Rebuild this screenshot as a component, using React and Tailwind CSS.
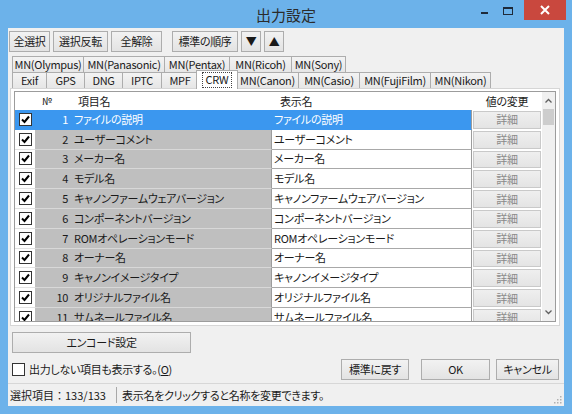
import React from "react";

const rows = [
  "ファイルの説明",
  "ユーザーコメント",
  "メーカー名",
  "モデル名",
  "キャノンファームウェアバージョン",
  "コンポーネントバージョン",
  "ROMオペレーションモード",
  "オーナー名",
  "キャノンイメージタイプ",
  "オリジナルファイル名",
  "サムネールファイル名",
];

const tabs1 = [
  ["MN(Olympus)", "w-[72px]"],
  ["MN(Panasonic)", "w-[82px]"],
  ["MN(Pentax)", "w-[66px]"],
  ["MN(Ricoh)", "w-[63px]"],
  ["MN(Sony)", "w-[55px]"],
];

const tabs2 = [
  ["Exif", "w-[35px]"],
  ["GPS", "w-[39px]"],
  ["DNG", "w-[39px]"],
  ["IPTC", "w-[40px]"],
  ["MPF", "w-[38px]"],
  ["CRW", "w-[42px]"],
  ["MN(Canon)", "w-[63px]"],
  ["MN(Casio)", "w-[62px]"],
  ["MN(FujiFilm)", "w-[72px]"],
  ["MN(Nikon)", "w-[61px]"],
];

function Btn({ children, className = "" }) {
  return (
    <div
      className={
        "flex items-center justify-center h-[21px] border border-[#adadad] bg-gradient-to-b from-[#f2f2f2] to-[#e3e3e3] text-[11px] text-[#1a1a1a] leading-none " +
        className
      }
    >
      {children}
    </div>
  );
}

function Check({ checked = true }) {
  return (
    <div className="w-[13px] h-[13px] border border-[#333] bg-white flex items-center justify-center">
      {checked && (
        <svg width="11" height="11" viewBox="0 0 11 11">
          <path d="M2 5.5 L4.5 8 L9 2.5" stroke="#000" strokeWidth="2" fill="none" />
        </svg>
      )}
    </div>
  );
}

function Tab({ label, w, selected }) {
  if (selected) {
    return (
      <div
        className={
          "relative z-10 -mx-[2px] -mt-[2px] h-[19px] border border-b-0 border-[#adadad] bg-white flex items-start justify-center pt-[1px] text-[11px] text-[#1a1a1a] leading-none " +
          w
        }
      >
        <span className="border border-dotted border-[#444] px-[3px] pt-[1px] pb-[2px]">{label}</span>
      </div>
    );
  }
  return (
    <div
      className={
        "h-[17px] -mr-[1px] border border-[#adadad] bg-gradient-to-b from-[#f3f3f3] to-[#e6e6e6] flex items-center justify-center text-[11px] text-[#1a1a1a] leading-none whitespace-nowrap " +
        w
      }
    >
      {label}
    </div>
  );
}

export default function App() {
  return (
    <div className="w-[572px] h-[414px] bg-[#6cb2ea] flex flex-col font-['Noto_Sans_CJK_JP',sans-serif] [font-feature-settings:'palt'] tracking-[-0.3px] overflow-hidden">
      {/* Title bar */}
      <div className="relative h-[28px] flex items-center justify-center">
        <span className="text-[15px] text-[#2b2b2b] pt-[2px] tracking-normal">出力設定</span>
        <div className="absolute top-0 right-[6px] flex items-start">
          <div className="w-[20px] h-[20px] flex items-center justify-center mr-[4px]">
            <div className="w-[7px] h-[2px] bg-[#1e2a3a] mt-[6px]" />
          </div>
          <div className="w-[20px] h-[20px] flex items-start justify-center pt-[7px] mr-[6px]">
            <div className="w-[10px] h-[8px] border border-[#1e2a3a] border-t-2" />
          </div>
          <div className="w-[42px] h-[20px] bg-[#c9483e] flex items-center justify-center">
            <svg width="10" height="10" viewBox="0 0 10 10">
              <path d="M1 1 L9 9 M9 1 L1 9" stroke="#fff" strokeWidth="2" />
            </svg>
          </div>
        </div>
      </div>

      {/* Client */}
      <div className="mx-[8px] mb-[8px] flex-1 bg-[#f0f0f0] flex flex-col">
        {/* toolbar */}
        <div className="mt-[3px] ml-[1px] flex items-center">
          <Btn className="w-[41px]">全選択</Btn>
          <Btn className="w-[55px] ml-[3px]">選択反転</Btn>
          <Btn className="w-[51px] ml-[3px]">全解除</Btn>
          <Btn className="w-[66px] ml-[10px]">標準の順序</Btn>
          <Btn className="w-[20px] ml-[3px] text-[10px]">▼</Btn>
          <Btn className="w-[20px] ml-[3px] text-[10px]">▲</Btn>
        </div>

        {/* tabs */}
        <div className="mt-[4px] ml-[4px] flex">
          {tabs1.map(([l, w]) => (
            <Tab key={l} label={l} w={w} />
          ))}
        </div>
        <div className="ml-[4px] -mt-[1px] flex items-start h-[17px]">
          {tabs2.map(([l, w]) => (
            <Tab key={l} label={l} w={w} selected={l === "CRW"} />
          ))}
        </div>

        {/* tab panel */}
        <div className="ml-[2px] mr-[4px] -mt-[1px] border border-[#d6d6d6] bg-white pt-[2px] pb-[3px] px-[3px]">
          <div className="h-[231px] border border-[#9c9c9c] bg-white flex">
            <div className="w-[527px] flex flex-col">
              {/* header */}
              <div className="h-[18px] flex items-center text-[11px] text-[#1a1a1a] leading-none">
                <div className="w-[20px]" />
                <div className="w-[37px] pl-[7px] text-[10px]">№</div>
                <div className="w-[200px] pl-[6px]">項目名</div>
                <div className="w-[200px] pl-[8px]">表示名</div>
                <div className="w-[70px] text-center">値の変更</div>
              </div>
              {/* body */}
              <div className="flex-1 overflow-hidden">
                {rows.map((name, i) => {
                  const sel = i === 0;
                  return (
                    <div key={i} className="h-[19.8px] flex text-[11px] leading-none">
                      <div
                        className={
                          "w-[20px] flex items-center justify-center border-b " +
                          (sel ? "bg-[#3b97ef] border-[#3b97ef]" : "bg-white border-[#e2e2e2]")
                        }
                      >
                        <Check />
                      </div>
                      <div
                        className={
                          "w-[37px] flex items-center justify-end pr-[4px] border-b " +
                          (sel ? "bg-[#3b97ef] text-white border-[#3b97ef]" : "bg-[#bfbfbf] text-[#1a1a1a] border-[#d8d8d8]")
                        }
                      >
                        {i + 1}
                      </div>
                      <div
                        className={
                          "w-[200px] flex items-center pl-[2px] border-b border-r whitespace-nowrap " +
                          (sel ? "bg-[#3b97ef] text-white border-[#3b97ef]" : "bg-[#bfbfbf] text-[#1a1a1a] border-[#d8d8d8] border-r-[#9c9c9c]")
                        }
                      >
                        {name}
                      </div>
                      <div
                        className={
                          "w-[200px] flex items-center pl-[2px] border-b border-r whitespace-nowrap " +
                          (sel ? "bg-[#3b97ef] text-white border-[#3b97ef] border-r-[#9c9c9c]" : "bg-white text-[#1a1a1a] border-[#a8a8a8] border-r-[#9c9c9c]")
                        }
                      >
                        {name}
                      </div>
                      <div className="w-[70px] bg-white py-[1px] px-[1px]">
                        <div className="h-full border border-[#c9c9c9] bg-gradient-to-b from-[#efefef] to-[#e4e4e4] flex items-center justify-center text-[#8a8a8a]">
                          詳細
                        </div>
                      </div>
                    </div>
                  );
                })}
              </div>
            </div>
            {/* scrollbar */}
            <div className="w-[13px] bg-[#f0f0f0] flex flex-col items-center">
              <div className="h-[17px] flex items-center justify-center">
                <svg width="7" height="5" viewBox="0 0 7 5">
                  <path d="M0.5 4.5 L3.5 1.5 L6.5 4.5" stroke="#606060" strokeWidth="1.3" fill="none" />
                </svg>
              </div>
              <div className="w-[11px] h-[16px] bg-[#cdcdcd]" />
              <div className="flex-1" />
              <div className="h-[17px] flex items-center justify-center">
                <svg width="7" height="5" viewBox="0 0 7 5">
                  <path d="M0.5 0.5 L3.5 3.5 L6.5 0.5" stroke="#606060" strokeWidth="1.3" fill="none" />
                </svg>
              </div>
            </div>
          </div>
        </div>

        {/* encode button */}
        <div className="mt-[6px] ml-[4px]">
          <Btn className="w-[179px]">エンコード設定</Btn>
        </div>

        {/* bottom row */}
        <div className="mt-[6px] h-[21px] flex items-center">
          <div className="ml-[4px] w-[13px] h-[13px] border border-[#333] bg-white" />
          <span className="ml-[4px] text-[11px] text-[#1a1a1a] leading-none">
            出力しない項目も表示する。(<span className="underline">O</span>)
          </span>
          <div className="flex-1" />
          <Btn className="w-[68px]">標準に戻す</Btn>
          <Btn className="w-[69px] ml-[12px]">OK</Btn>
          <Btn className="w-[63px] ml-[6px] mr-[5px]">キャンセル</Btn>
        </div>

        {/* status bar */}
        <div className="mt-auto h-[23px] border-t border-[#d7d7d7] flex items-center text-[11px] text-[#1a1a1a] leading-none relative">
          <span className="ml-[2px] w-[106px] [font-feature-settings:normal] tracking-normal">選択項目：133/133</span>
          <div className="w-[1px] h-[16px] bg-[#a8a8a8]" />
          <span className="ml-[5px]">表示名をクリックすると名称を変更できます。</span>
          <svg className="absolute right-[2px] bottom-[2px]" width="10" height="10" viewBox="0 0 10 10">
            <rect x="8" y="2" width="1.5" height="1.5" fill="#b0b0b0" />
            <rect x="5" y="5" width="1.5" height="1.5" fill="#b0b0b0" />
            <rect x="8" y="5" width="1.5" height="1.5" fill="#b0b0b0" />
            <rect x="2" y="8" width="1.5" height="1.5" fill="#b0b0b0" />
            <rect x="5" y="8" width="1.5" height="1.5" fill="#b0b0b0" />
            <rect x="8" y="8" width="1.5" height="1.5" fill="#b0b0b0" />
          </svg>
        </div>
      </div>
    </div>
  );
}
